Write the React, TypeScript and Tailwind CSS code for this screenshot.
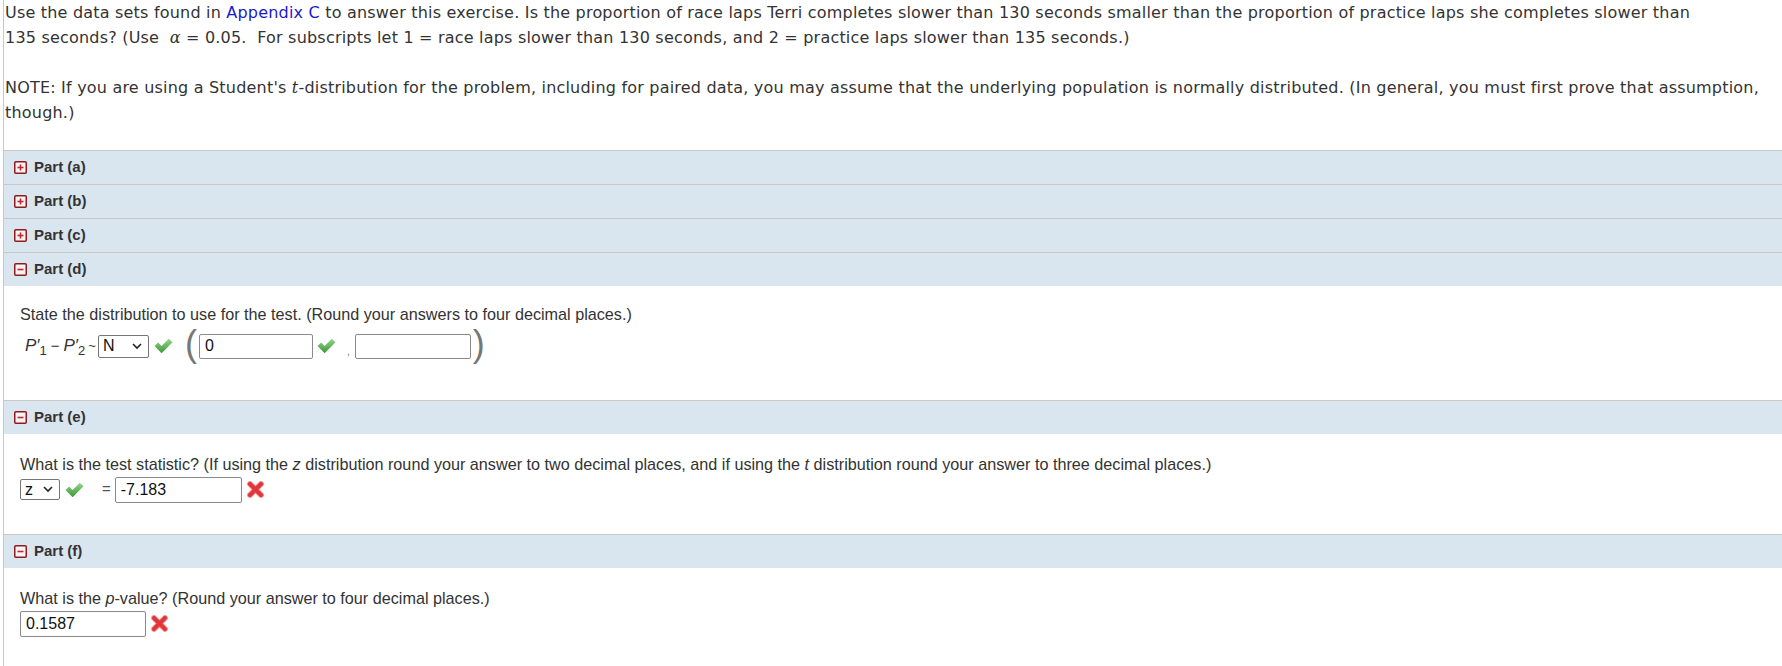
import React from 'react';

const PartIcon = ({ open }: { open: boolean }) => (
  <svg width="13" height="13" viewBox="0 0 13 13" className="shrink-0">
    <rect x="0.75" y="0.75" width="11.5" height="11.5" rx="1" fill="#f6f2f2" stroke="#8e1c1c" strokeWidth="1.5" />
    <path d="M3.5 6.5 H9.5" stroke="#c0282d" strokeWidth="1.6" />
    {!open && <path d="M6.5 3.5 V9.5" stroke="#c0282d" strokeWidth="1.6" />}
  </svg>
);

const Check = () => (
  <svg width="19" height="16" viewBox="0 0 19 16" className="shrink-0">
    <defs>
      <linearGradient id="chk" x1="0" y1="0" x2="0" y2="1">
        <stop offset="0" stopColor="#93d884" />
        <stop offset="1" stopColor="#3c963c" />
      </linearGradient>
    </defs>
    <path d="M0.5 8 L4.2 4.6 L7.6 7.9 L14.8 0.8 L18.5 4.3 L7.6 15.2 Z" fill="url(#chk)" />
  </svg>
);

const Cross = () => (
  <svg width="17" height="17" viewBox="0 0 17 17" className="shrink-0">
    <path d="M3 3 L14 14 M14 3 L3 14" stroke="#f4a3a3" strokeWidth="6" strokeLinecap="round" />
    <path d="M3 3 L14 14 M14 3 L3 14" stroke="#e3363b" strokeWidth="4.2" strokeLinecap="round" />
  </svg>
);

const Chevron = () => (
  <svg width="10" height="7" viewBox="0 0 10 7">
    <path d="M1 1 L5 5 L9 1" fill="none" stroke="#222" strokeWidth="1.6" />
  </svg>
);

const FakeSelect = ({ value, className }: { value: string; className: string }) => (
  <div
    className={`flex items-center justify-between border border-[#767676] rounded-[2px] bg-white pl-[4px] pr-[6px] text-[16px] text-[#111] ${className}`}
  >
    <span>{value}</span>
    <Chevron />
  </div>
);

const Box = ({ value, className }: { value?: string; className: string }) => (
  <div
    className={`flex items-center border border-[#8a8a8a] rounded-[2px] bg-white px-[5px] text-[16px] text-[#111] ${className}`}
  >
    {value}
  </div>
);

const PartHeader = ({ label, open }: { label: string; open: boolean }) => (
  <div className="h-[34px] border-t border-[#c8c8c8] bg-[#d9e5ef] flex items-center gap-[7px] pl-[10px]">
    <PartIcon open={open} />
    <span className="font-bold text-[15px] text-[#333]">{label}</span>
  </div>
);

export default function App() {
  return (
    <div className="min-h-screen bg-white font-['Liberation_Sans',Arial,sans-serif]">
      <div className="ml-[3px] border-l border-[#c8c8c8] min-h-[666px]">
        {/* Problem statement */}
        <div className="pl-[1px] pt-0 font-['DejaVu_Sans',sans-serif] text-[16px] leading-[25px] tracking-[0.2px] text-[#333]">
          <p className="mb-[25px]">
            Use the data sets found in <span className="text-[#1a1acc]">Appendix C</span> to answer this exercise. Is
            the proportion of race laps Terri completes slower than 130 seconds smaller than the proportion of practice
            laps she completes slower than 135{'\u00a0'}seconds? (Use{'\u00a0'}{' '}
            <span className="italic font-['DejaVu_Serif',serif]">α</span> = 0.05.{'\u00a0'} For subscripts let 1 = race
            laps slower than 130 seconds, and 2 = practice laps slower than 135 seconds.)
          </p>
          <p className="mb-[25px]">
            NOTE: If you are using a Student's <span className="italic font-['DejaVu_Serif',serif]">t</span>
            -distribution for the problem, including for paired data, you may assume that the underlying population is
            normally distributed. (In general, you must first prove that assumption, though.)
          </p>
        </div>

        {/* Parts */}
        <PartHeader label="Part (a)" open={false} />
        <PartHeader label="Part (b)" open={false} />
        <PartHeader label="Part (c)" open={false} />
        <PartHeader label="Part (d)" open={true} />
        <div className="h-[114px] pl-[16px] pt-[18px] text-[16.2px] text-[#333]">
          <p className="leading-[20px]">
            State the distribution to use for the test. (Round your answers to four decimal places.)
          </p>
          <div className="flex items-center mt-[5px] h-[34px]">
            <span className="ml-[5px] italic text-[17px] text-[#333]">
              P′<sub className="not-italic text-[13px]">1</sub>
            </span>
            <span className="mx-[4px] text-[15px]">−</span>
            <span className="italic text-[17px] text-[#333]">
              P′<sub className="not-italic text-[13px]">2</sub>
            </span>
            <span className="ml-[3px] mr-[2px] text-[13px]">~</span>
            <FakeSelect value="N" className="w-[51px] h-[23px]" />
            <span className="ml-[5px]">
              <Check />
            </span>
            <span className="ml-[12px] text-[36px] font-light leading-none text-[#777] -mt-[4px]">(</span>
            <Box value="0" className="ml-[2px] w-[114px] h-[25px]" />
            <span className="ml-[4px]">
              <Check />
            </span>
            <span className="ml-[11px] text-[10px] text-[#777] mt-[10px]">,</span>
            <Box className="ml-[5px] w-[116px] h-[25px]" />
            <span className="ml-[2px] text-[36px] font-light leading-none text-[#777] -mt-[4px]">)</span>
          </div>
        </div>

        <PartHeader label="Part (e)" open={true} />
        <div className="h-[100px] pl-[16px] pt-[20px] text-[16.2px] text-[#333]">
          <p className="leading-[20px]">
            What is the test statistic? (If using the <i>z</i> distribution round your answer to two decimal places,
            and if using the <i>t</i> distribution round your answer to three decimal places.)
          </p>
          <div className="flex items-center mt-[2px] h-[27px]">
            <FakeSelect value="z" className="w-[40px] h-[21px]" />
            <span className="ml-[5px]">
              <Check />
            </span>
            <span className="ml-[18px] text-[15px] text-[#555]">=</span>
            <Box value="-7.183" className="ml-[4px] w-[127px] h-[26px]" />
            <span className="ml-[5px]">
              <Cross />
            </span>
          </div>
        </div>

        <PartHeader label="Part (f)" open={true} />
        <div className="pl-[16px] pt-[20px] text-[16.2px] text-[#333]">
          <p className="leading-[20px]">
            What is the <i>p</i>-value? (Round your answer to four decimal places.)
          </p>
          <div className="flex items-center mt-[2px] h-[27px]">
            <Box value="0.1587" className="w-[126px] h-[26px]" />
            <span className="ml-[5px]">
              <Cross />
            </span>
          </div>
        </div>
      </div>
    </div>
  );
}
